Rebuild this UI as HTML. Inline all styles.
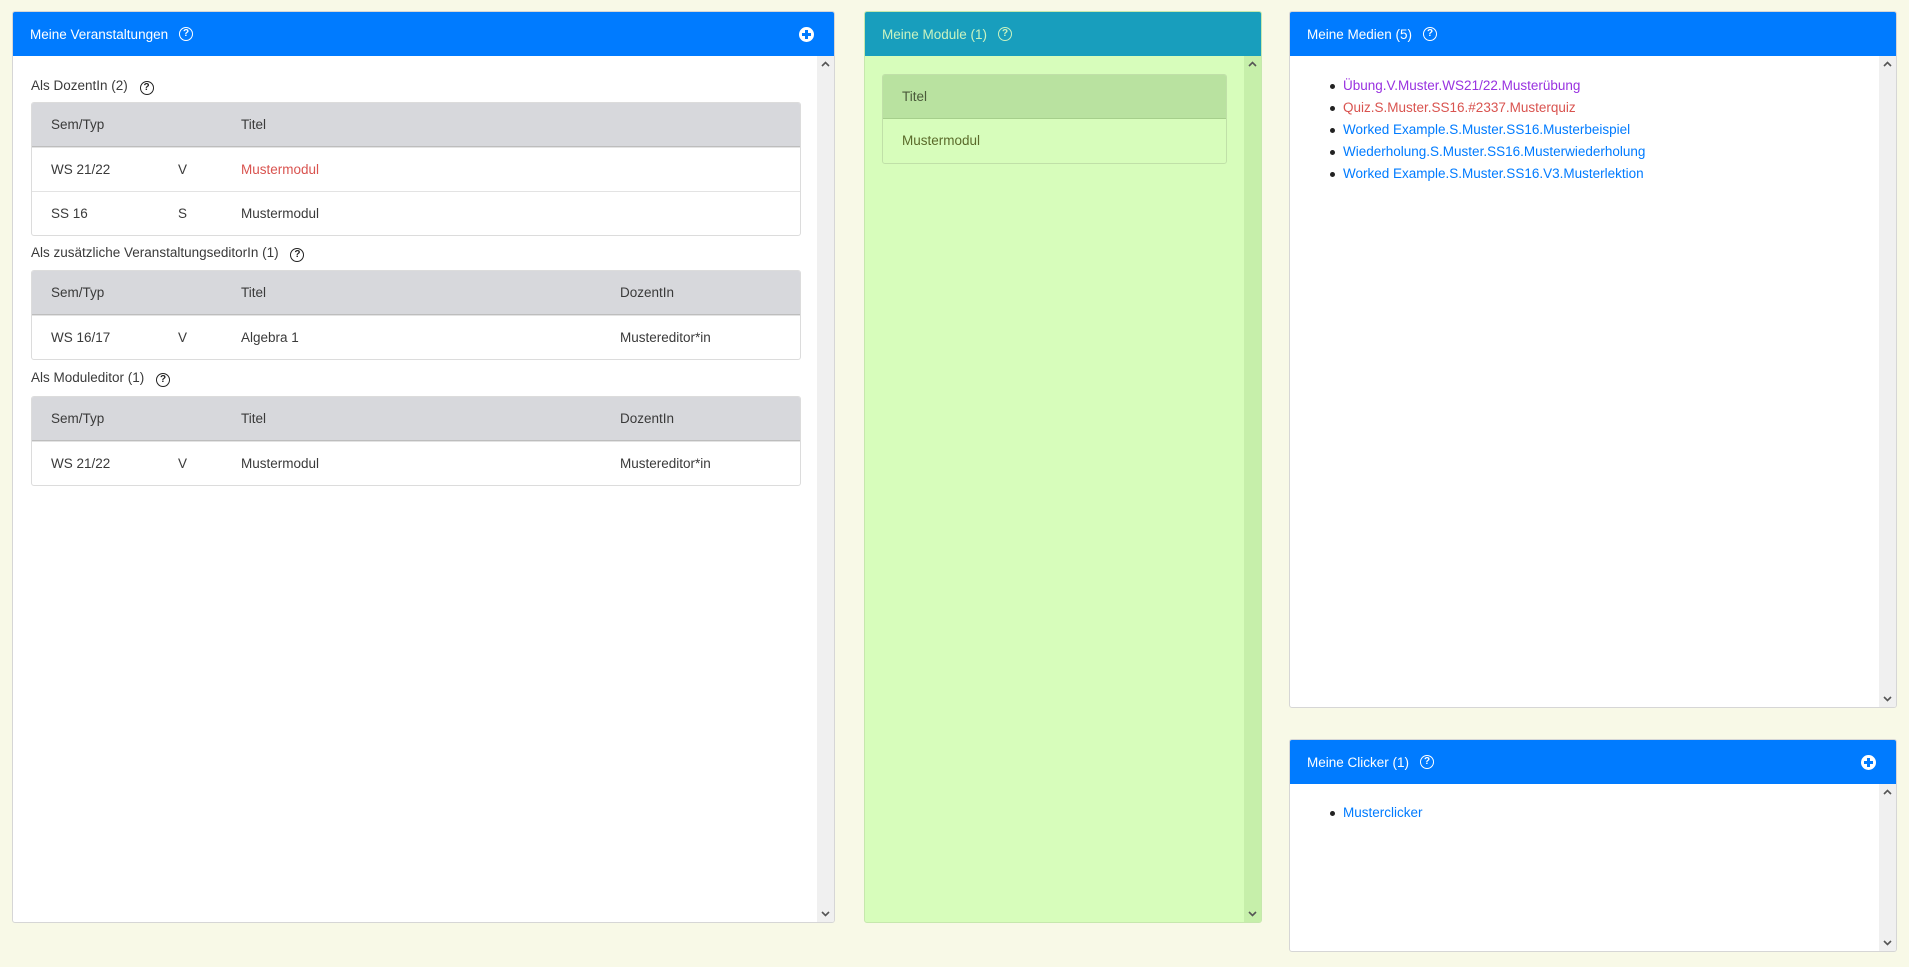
<!DOCTYPE html>
<html><head><meta charset="utf-8"><style>
*{box-sizing:border-box;margin:0;padding:0}
body{width:1909px;height:967px;background:#f8f9e7;font-family:"Liberation Sans",sans-serif;font-size:13.5px;color:#3a3a3a;position:relative;overflow:hidden}
.card{position:absolute;background:#fff;border:1px solid #d6d6d6;border-radius:3px;overflow:hidden}
.hd{height:44px;background:#007bff;color:#fff;display:flex;align-items:center;padding-left:17px;position:relative}
.q{display:inline-block;width:14px;height:14px;border:1.6px solid currentColor;border-radius:50%;font-size:10px;font-weight:bold;line-height:11px;text-align:center;margin-left:11px}
.plus{position:absolute;right:20px;top:15px;width:15px;height:15px;border-radius:50%;background:#fff}
.plus:before{content:"";position:absolute;left:3px;top:6px;width:9px;height:3px;background:#007bff}
.plus:after{content:"";position:absolute;left:6px;top:3px;width:3px;height:9px;background:#007bff}
.sb{position:absolute;right:0;width:17px;background:#f0f0f0}
.sb svg{position:absolute;left:4px}
.t{position:absolute}
.tbl{position:absolute;left:18px;width:770px;border:1px solid #dcdcdc;border-radius:3px;overflow:hidden}
.row{height:44px;position:relative;border-top:1px solid #e3e3e3}
.row:first-child{border-top:none;background:#d7d8dc;border-bottom:1px solid #bdbdbd}
.row span{position:absolute;top:14px}
.c1{left:19px}.c2{left:146px}.c3{left:209px}.c4{left:588px}
ul{position:absolute;list-style:none}
li{height:22px;line-height:22px;position:relative;padding-left:13px}
li:before{content:"";position:absolute;left:0;top:9px;width:5px;height:5px;border-radius:50%;background:#222}
</style></head><body>
<svg width="0" height="0" style="position:absolute"><defs>
<symbol id="up" viewBox="0 0 9 6"><path d="M1 5L4.5 1.5L8 5" fill="none" stroke="#555" stroke-width="1.6"/></symbol>
<symbol id="dn" viewBox="0 0 9 6"><path d="M1 1L4.5 4.5L8 1" fill="none" stroke="#555" stroke-width="1.6"/></symbol>
</defs></svg>

<div class="card" style="left:12px;top:11px;width:823px;height:912px">
<div class="hd">Meine Veranstaltungen <span class="q">?</span><div class="plus"></div></div>
<div class="sb" style="top:44px;bottom:0"><svg width="9" height="6" style="top:5px"><use href="#up"/></svg><svg width="9" height="6" style="bottom:5px"><use href="#dn"/></svg></div>
<div class="t" style="left:18px;top:66px">Als DozentIn (2) <span class="q" style="margin-left:8px;color:#222">?</span></div>
<div class="tbl" style="top:90px">
<div class="row"><span class="c1">Sem/Typ</span><span class="c3">Titel</span></div>
<div class="row"><span class="c1">WS 21/22</span><span class="c2">V</span><span class="c3" style="color:#d9534f">Mustermodul</span></div>
<div class="row"><span class="c1">SS 16</span><span class="c2">S</span><span class="c3">Mustermodul</span></div>
</div>
<div class="t" style="left:18px;top:233px">Als zusätzliche VeranstaltungseditorIn (1) <span class="q" style="margin-left:8px;color:#222">?</span></div>
<div class="tbl" style="top:258px">
<div class="row"><span class="c1">Sem/Typ</span><span class="c3">Titel</span><span class="c4">DozentIn</span></div>
<div class="row"><span class="c1">WS 16/17</span><span class="c2">V</span><span class="c3">Algebra 1</span><span class="c4">Mustereditor*in</span></div>
</div>
<div class="t" style="left:18px;top:358px">Als Moduleditor (1) <span class="q" style="margin-left:8px;color:#222">?</span></div>
<div class="tbl" style="top:384px">
<div class="row"><span class="c1">Sem/Typ</span><span class="c3">Titel</span><span class="c4">DozentIn</span></div>
<div class="row"><span class="c1">WS 21/22</span><span class="c2">V</span><span class="c3">Mustermodul</span><span class="c4">Mustereditor*in</span></div>
</div>
</div>

<div class="card" style="left:864px;top:11px;width:398px;height:912px;background:#d7fdbb;border-color:#c6e8ad">
<div class="hd" style="background:#189ebd;color:#c9f3c0">Meine Module (1) <span class="q">?</span></div>
<div class="sb" style="top:44px;bottom:0;background:#c6efaa"><svg width="9" height="6" style="top:5px"><use href="#up"/></svg><svg width="9" height="6" style="bottom:5px"><use href="#dn"/></svg></div>
<div class="tbl" style="left:17px;top:62px;width:345px;border-color:#c0e0a8">
<div class="row" style="background:#b9e2a0;border-bottom-color:#a6cf8c"><span class="c1" style="color:#4a5a3a">Titel</span></div>
<div class="row" style="border-top:none"><span class="c1" style="color:#5a6a2a">Mustermodul</span></div>
</div>
</div>

<div class="card" style="left:1289px;top:11px;width:608px;height:697px">
<div class="hd">Meine Medien (5) <span class="q">?</span></div>
<div class="sb" style="top:44px;bottom:0"><svg width="9" height="6" style="top:5px"><use href="#up"/></svg><svg width="9" height="6" style="bottom:5px"><use href="#dn"/></svg></div>
<ul style="left:40px;top:63px">
<li style="color:#9932e0">Übung.V.Muster.WS21/22.Musterübung</li>
<li style="color:#d9534f">Quiz.S.Muster.SS16.#2337.Musterquiz</li>
<li style="color:#007bff">Worked Example.S.Muster.SS16.Musterbeispiel</li>
<li style="color:#007bff">Wiederholung.S.Muster.SS16.Musterwiederholung</li>
<li style="color:#007bff">Worked Example.S.Muster.SS16.V3.Musterlektion</li>
</ul>
</div>

<div class="card" style="left:1289px;top:739px;width:608px;height:213px">
<div class="hd">Meine Clicker (1) <span class="q">?</span><div class="plus"></div></div>
<div class="sb" style="top:44px;bottom:0"><svg width="9" height="6" style="top:5px"><use href="#up"/></svg><svg width="9" height="6" style="bottom:5px"><use href="#dn"/></svg></div>
<ul style="left:40px;top:62px"><li style="color:#007bff">Musterclicker</li></ul>
</div>
</body></html>
